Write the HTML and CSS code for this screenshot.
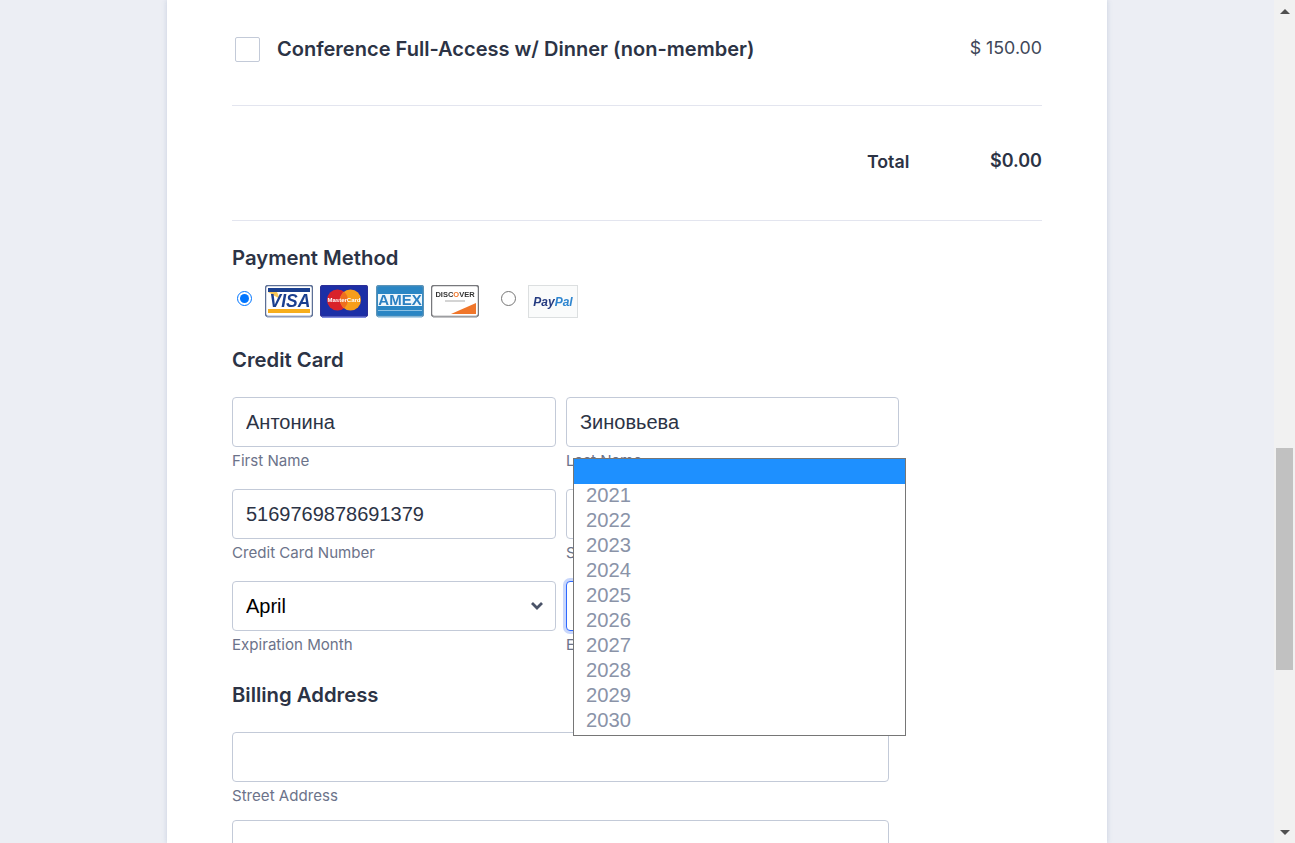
FILE: index.html
```html
<!DOCTYPE html>
<html lang="en">
<head>
  <meta charset="UTF-8">
  <meta name="viewport" content="width=device-width, initial-scale=1.0">
  <title>Conference Registration</title>
  <link rel="stylesheet" href="styles.css">
</head>
<body>
  <div class="viewport">
    <main class="card">
      <div class="item-row">
        <span class="checkbox"></span>
        <span class="item-name">Conference Full-Access w/ Dinner (non-member)</span>
        <span class="item-price">$ 150.00</span>
      </div>
      <div class="total-row">
        <span class="total-label">Total</span>
        <span class="total-value">$0.00</span>
      </div>

      <h2 class="payment-title">Payment Method</h2>
      <div class="payment-row">
        <input type="radio" class="radio" name="pay" checked>
        <svg class="pay-card" width="48" height="33" viewBox="0 0 48 33">
          <rect x="0.5" y="0.5" width="47" height="31" rx="2.5" fill="#fff" stroke="#5c6f96" stroke-width="1.5"/>
          <rect x="3" y="3" width="42" height="4" fill="#1a3f8f"/>
          <rect x="3" y="24" width="42" height="4" fill="#f7ae1c"/>
          <path d="M3 7h9l3 7z" fill="#f7c65a"/>
          <text class="visa" x="25" y="22" text-anchor="middle">VISA</text>
          <rect x="2" y="31.500" width="44" height="1.500" fill="#c3cbdc"/>
        </svg>
        <svg class="pay-card" width="48" height="33" viewBox="0 0 48 33">
          <rect x="0.5" y="0.5" width="47" height="31" rx="2.500" fill="#1c2fa6" stroke="#2a2f9a" stroke-width="1.5"/>
          <circle cx="17.500" cy="15" r="10.500" fill="#d9222a"/>
          <circle cx="30.500" cy="15" r="10.500" fill="#f79e1b"/>
          <path d="M24 6.800a10.500 10.500 0 0 1 0 16.400a10.500 10.500 0 0 1 0-16.400z" fill="#ee6f1f"/>
          <text class="mc" x="24" y="17" text-anchor="middle">MasterCard</text>
          <rect x="2" y="31.500" width="44" height="1.500" fill="#7f8be0"/>
        </svg>
        <svg class="pay-card amex-card" width="48" height="33" viewBox="0 0 48 33">
          <rect x="0.5" y="0.5" width="47" height="31" rx="2.500" fill="#2a86c4" stroke="#5b93b8" stroke-width="1.5"/>
          <rect x="2" y="9" width="44" height="12" fill="#eef6fb"/>
          <rect x="2" y="25" width="44" height="1" fill="#8cc2e4"/>
          <text class="amex" x="24" y="20" text-anchor="middle">AMEX</text>
          <rect x="2" y="31.500" width="44" height="1.500" fill="#b5d6ea"/>
        </svg>
        <svg class="pay-card" width="48" height="33" viewBox="0 0 48 33">
          <rect x="0.5" y="0.5" width="47" height="31" rx="2.500" fill="#fff" stroke="#77787c" stroke-width="1.5"/>
          <path d="M20 29L45 18V29z" fill="#f0762a"/>
          <text class="discover" x="24" y="12" text-anchor="middle">DISC<tspan fill="#f0762a">O</tspan>VER</text>
          <rect x="14" y="15.500" width="20" height="1" fill="#a9a9a9"/>
          <rect x="2" y="31.500" width="44" height="1.500" fill="#c4c4c6"/>
        </svg>
        <input type="radio" class="radio radio-paypal" name="pay">
        <svg class="pay-card paypal-card" width="50" height="33" viewBox="0 0 50 33">
          <rect x="0.5" y="0.5" width="49" height="32" fill="#fafbfb" stroke="#dcdfe0"/>
          <text class="paypal" x="25" y="21" text-anchor="middle"><tspan fill="#253b80">Pay</tspan><tspan fill="#2f86d0">Pal</tspan></text>
        </svg>
      </div>

      <h2 class="card-title">Credit Card</h2>
      <div class="form-row">
        <div class="field field-left">
          <input class="text-input" type="text" value="Антонина">
          <label class="field-label">First Name</label>
        </div>
        <div class="field field-right">
          <input class="text-input" type="text" value="Зиновьева">
          <label class="field-label">Last Name</label>
        </div>
      </div>
      <div class="form-row">
        <div class="field field-left">
          <input class="text-input" type="text" value="5169769878691379">
          <label class="field-label">Credit Card Number</label>
        </div>
        <div class="field field-right">
          <input class="text-input" type="text">
          <label class="field-label">Security Code</label>
        </div>
      </div>
      <div class="form-row">
        <div class="field field-left">
          <div class="select-box">
            <select class="text-input select-input">
              <option>April</option>
            </select>
            <svg class="chevron" width="14" height="9" viewBox="0 0 14 9">
              <path d="M2 2l5 5 5-5" fill="none" stroke="#4a5368" stroke-width="2.800"/>
            </svg>
          </div>
          <label class="field-label">Expiration Month</label>
        </div>
        <div class="field field-right year-field">
          <div class="text-input year-focus"></div>
          <label class="field-label">Expiration Year</label>
          <ul class="year-list">
            <li class="year-active"></li>
            <li>2021</li>
            <li>2022</li>
            <li>2023</li>
            <li>2024</li>
            <li>2025</li>
            <li>2026</li>
            <li>2027</li>
            <li>2028</li>
            <li>2029</li>
            <li>2030</li>
          </ul>
        </div>
      </div>

      <h2 class="billing-title">Billing Address</h2>
      <div class="field field-wide">
        <input class="text-input" type="text">
        <label class="field-label">Street Address</label>
      </div>
      <div class="field field-wide">
        <input class="text-input" type="text">
      </div>
    </main>
  </div>
  <div class="scrollbar">
    <span class="arrow-up"></span>
    <div class="track"><div class="thumb"></div></div>
    <span class="arrow-down"></span>
  </div>
</body>
</html>
```

FILE: styles.css
```css
html, body {
  margin: 0;
  height: 843px;
  overflow: hidden;
}
body {
  display: flex;
  font-family: Inter, "Liberation Sans", sans-serif;
  color: #2c3345;
  background: #eceef4;
}
.viewport {
  flex: 1;
  height: 843px;
  overflow: hidden;
}
.card {
  width: 940px;
  height: 843px;
  box-sizing: border-box;
  margin: 0 auto;
  padding: 37px 65px 0;
  background: #fff;
  box-shadow: 0 0 5px rgba(87, 114, 162, 0.25);
}
.item-row {
  display: flex;
  align-items: center;
  height: 25px;
  padding-bottom: 43px;
  border-bottom: 1px solid #e3e5ef;
}
.checkbox {
  width: 23px;
  height: 23px;
  margin-left: 3px;
  border: 1px solid #c3cad8;
  border-radius: 2px;
}
.item-name {
  margin-left: 17px;
  margin-top: -2px;
  font-size: 20.040px;
  font-weight: 600;
}
.item-price {
  margin-left: auto;
  margin-top: -4px;
  font-size: 17.800px;
  color: #414859;
}
.total-row {
  display: flex;
  justify-content: flex-end;
  align-items: center;
  height: 115px;
  padding-bottom: 6px;
  box-sizing: border-box;
  border-bottom: 1px solid #e3e5ef;
}
.total-label {
  width: 123px;
  font-size: 17.800px;
  font-weight: 600;
  margin-top: 2px;
}
.total-value {
  font-size: 18px;
  font-weight: 600;
}
h2 {
  margin: 0;
  font-size: 20.300px;
  font-weight: 600;
  line-height: 24px;
}
.payment-title {
  margin-top: 25px;
}
.payment-row {
  display: flex;
  align-items: flex-start;
  gap: 7px;
  height: 33px;
  margin-top: 15px;
}
.radio {
  width: 15px;
  height: 15px;
  margin: 6px 6px 0 5px;
}
.radio-paypal {
  margin: 6px 5px 0 15px;
}
.pay-card {
  display: block;
  filter: blur(0.4px);
}
.amex-card {
  margin-left: 1px;
}
.pay-card text {
  font-family: "Liberation Sans", sans-serif;
  font-weight: 700;
}
.visa {
  font-size: 17.500px;
  font-style: italic;
  fill: #1a3f8f;
}
.mc {
  font-size: 6px;
  fill: #fff;
}
.amex {
  font-size: 15px;
  fill: #2a80c2;
}
.discover {
  font-size: 7.500px;
  fill: #333;
}
.paypal {
  font-size: 12px;
  font-style: italic;
}
.card-title {
  margin-top: 30px;
  margin-bottom: 25px;
}
.form-row {
  display: flex;
  gap: 10px;
  height: 92px;
}
.field-left {
  width: 324px;
}
.field-right {
  width: 333px;
}
.field-wide {
  width: 657px;
  height: 88px;
}
.text-input {
  display: block;
  width: 100%;
  height: 50px;
  box-sizing: border-box;
  padding: 0 13px;
  border: 1px solid #c3cad8;
  border-radius: 4px;
  background: #fff;
  font-family: "Liberation Sans", sans-serif;
  font-size: 20px;
  color: #2c3345;
}
.field-label {
  display: block;
  margin-top: 5px;
  font-size: 15.100px;
  line-height: 18px;
  color: #6c738a;
}
.select-box {
  position: relative;
}
.select-input {
  appearance: none;
  color: #000;
}
.chevron {
  position: absolute;
  top: 20px;
  right: 12px;
}
.year-field {
  position: relative;
}
.year-focus {
  border-color: #2e69ff;
  box-shadow: 0 0 0 3px #c9d7fb;
}
.year-list {
  position: absolute;
  top: -123px;
  left: 7px;
  z-index: 2;
  width: 331px;
  margin: 0;
  padding: 0 0 1px;
  list-style: none;
  border: 1px solid #767676;
  background: #fff;
  font-family: "Liberation Sans", sans-serif;
  font-size: 20.200px;
  line-height: 23px;
  color: #8a93a8;
}
.year-list li {
  height: 25px;
  padding-left: 12px;
}
.year-active {
  background: #1e90ff;
}
.billing-title {
  margin-top: 10px;
  margin-bottom: 25px;
}
.scrollbar {
  display: flex;
  flex-direction: column;
  align-items: center;
  width: 21px;
  height: 843px;
  background: #f1f1f1;
}
.arrow-up {
  margin-top: 9px;
  border: 5px solid transparent;
  border-top: 0;
  border-bottom-color: #505050;
}
.track {
  flex: 1;
  width: 17px;
  padding-top: 434px;
  box-sizing: border-box;
}
.thumb {
  height: 222px;
  background: #c1c1c1;
}
.arrow-down {
  margin-bottom: 8px;
  border: 5px solid transparent;
  border-bottom: 0;
  border-top-color: #505050;
}
```
